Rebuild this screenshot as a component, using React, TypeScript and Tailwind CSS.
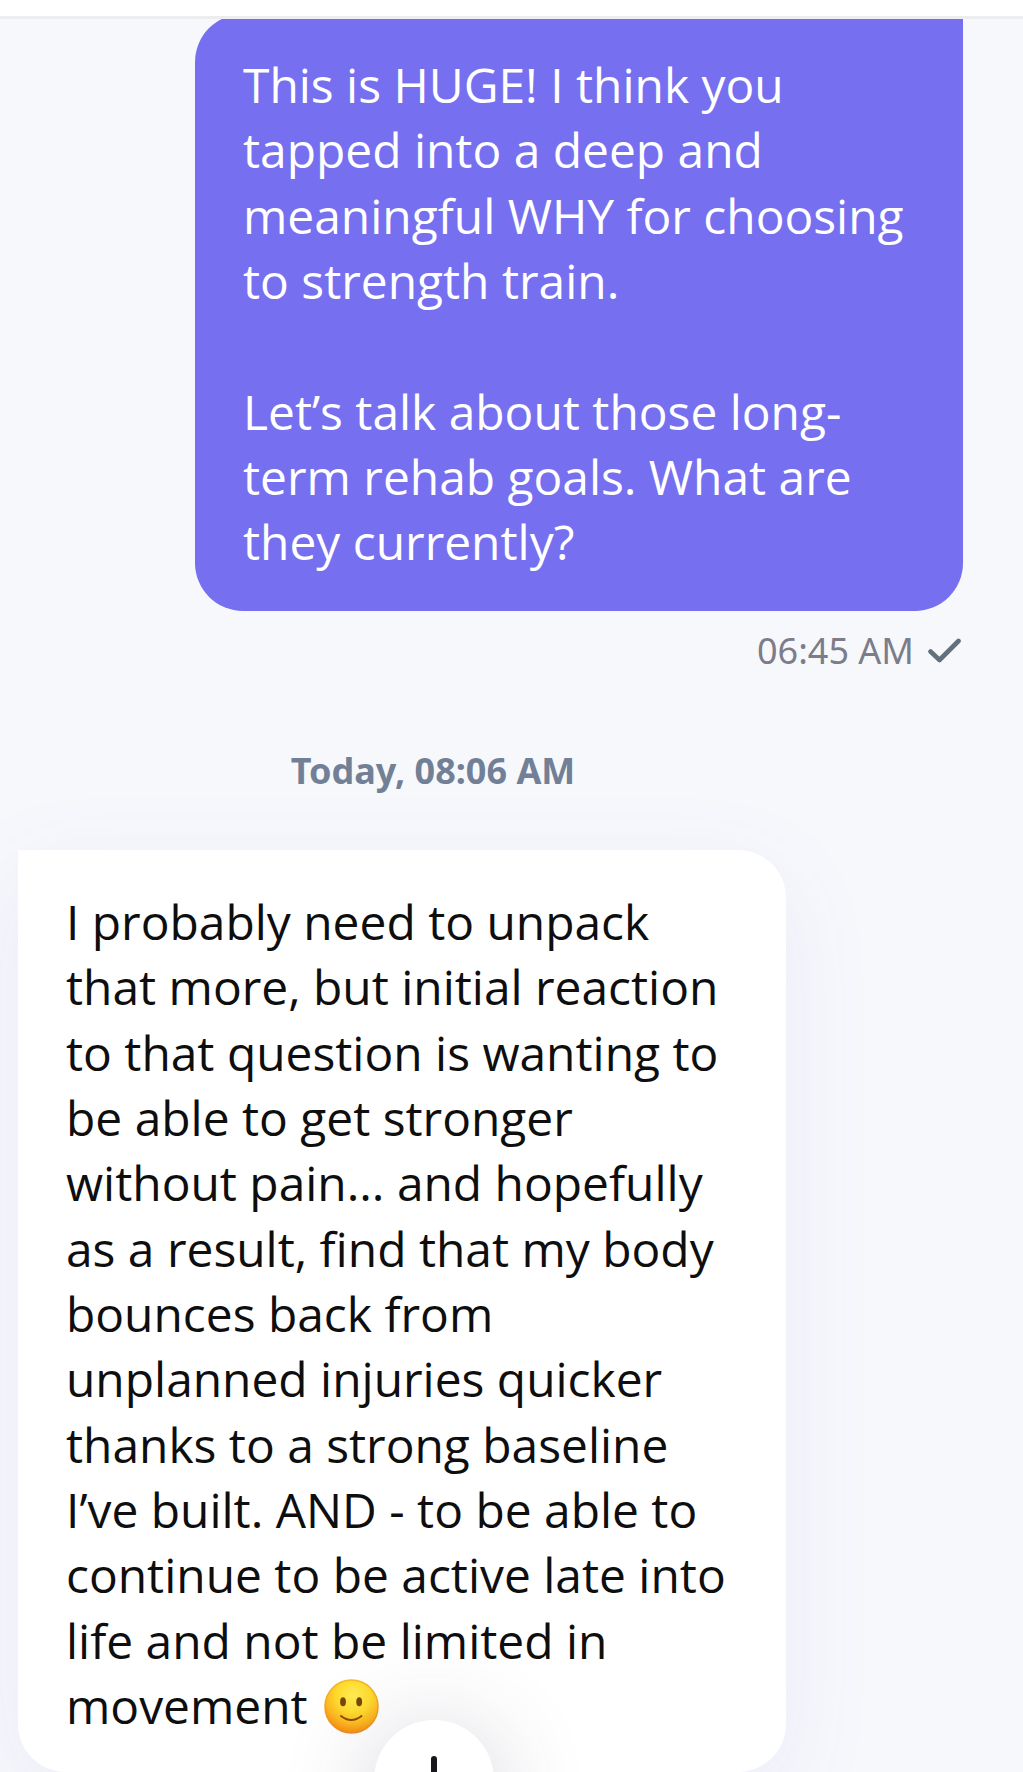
const sent = [
  'This is HUGE! I think you',
  'tapped into a deep and',
  'meaningful WHY for choosing',
  'to strength train.',
  '',
  'Let’s talk about those long-',
  'term rehab goals. What are',
  'they currently?',
];

const received = [
  'I probably need to unpack',
  'that more, but initial reaction',
  'to that question is wanting to',
  'be able to get stronger',
  'without pain... and hopefully',
  'as a result, find that my body',
  'bounces back from',
  'unplanned injuries quicker',
  'thanks to a strong baseline',
  'I’ve built. AND - to be able to',
  'continue to be active late into',
  'life and not be limited in',
];

function Smiley() {
  return (
    <svg viewBox="0 0 55 55" className="absolute top-[6px] left-[258px] size-[55px]">
      <defs>
        <radialGradient id="face" cx="54%" cy="30%" r="70%">
          <stop offset="0" stopColor="#ffee55" />
          <stop offset="0.45" stopColor="#ffdc2e" />
          <stop offset="0.75" stopColor="#fdb91f" />
          <stop offset="1" stopColor="#f58e12" />
        </radialGradient>
        <linearGradient id="rim" x1="0" y1="0" x2="0" y2="1">
          <stop offset="0" stopColor="#f8b91e" />
          <stop offset="1" stopColor="#ee8b24" />
        </linearGradient>
      </defs>
      <circle cx="27.5" cy="27.5" r="26.5" fill="url(#face)" stroke="url(#rim)" strokeWidth="1.5" />
      <ellipse cx="19" cy="22.8" rx="2.9" ry="4.5" fill="#7a4508" />
      <ellipse cx="35.2" cy="22.8" rx="2.9" ry="4.5" fill="#7a4508" />
      <path d="M17 37 Q27.3 45 37.5 37" fill="none" stroke="#8a4a06" strokeWidth="1.9" strokeLinecap="round" />
    </svg>
  );
}

export default function App() {
  return (
    <div className="relative h-[1772px] w-[1023px] overflow-hidden bg-[#f7f8fc] font-['Noto_Sans',sans-serif]">
      <div className="relative z-10 h-[19px] border-b-3 border-[#ededf0] bg-white" />
      <div className="-mt-[5px] ml-[195px] h-[597px] w-[768px] rounded-[48px] rounded-tr-none bg-[#7670f0] px-[48px] pt-[38px] font-['Open_Sans',sans-serif] text-[47.9px] leading-[65.35px] text-white">
        {sent.map((line, i) => (
          <p key={i} className="h-[65.35px] whitespace-nowrap">{line}</p>
        ))}
      </div>
      <div className="mt-[16px] mr-[61px] flex h-[48px] items-center justify-end gap-[14px] text-[36px] text-[#7c7c8a]">
        <span>06:45 AM</span>
        <svg viewBox="0 0 34 26" className="h-[26px] w-[34px]" fill="none" stroke="#63717c" strokeWidth="4.6" strokeLinecap="round" strokeLinejoin="round">
          <path d="M2.5 13.5 L11.5 22 L30.5 3" />
        </svg>
      </div>
      <div className="mt-[72px] w-[866px] text-center text-[36px] leading-[48px] font-bold text-[#718096]">Today, 08:06 AM</div>
      <div className="mt-[55px] ml-[18px] h-[922px] w-[768px] rounded-[48px] rounded-tl-none bg-white px-[48px] pt-[39px] font-['Open_Sans',sans-serif] text-[47.9px] leading-[65.35px] text-[#0e0e0e] shadow-[0_24px_96px_rgba(100,96,190,0.08)]">
        {received.map((line) => (
          <p key={line} className="h-[65.35px] whitespace-nowrap">{line}</p>
        ))}
        <p className="relative h-[65.35px]">movement <Smiley /></p>
      </div>
      <button className="absolute top-[1720px] left-[374px] flex size-[120px] justify-center rounded-full bg-white pt-[36px] shadow-[0_12px_96px_rgba(60,60,90,0.24)]">
        <svg viewBox="0 0 48 48" className="size-[48px]" fill="none" stroke="#17171c" strokeWidth="6" strokeLinecap="round">
          <path d="M24 3 V45 M6 27 L24 45 L42 27" />
        </svg>
      </button>
    </div>
  );
}
